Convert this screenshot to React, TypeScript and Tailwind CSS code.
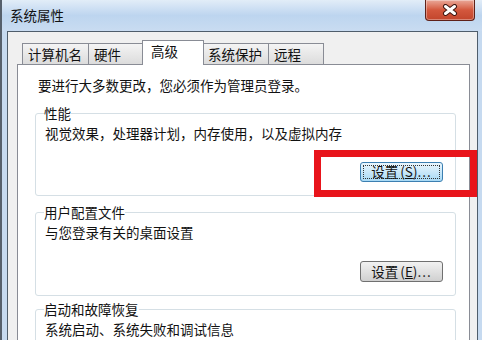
const tabs = [
  { label: "计算机名", width: "w-[67px]" },
  { label: "硬件", width: "w-[56px]" },
  { label: "高级", width: "w-[62px]", active: true },
  { label: "系统保护", width: "w-[67px]" },
  { label: "远程", width: "w-[56px]" },
];

function CloseButton() {
  return (
    <div className="absolute top-0 right-[7px] w-[50px] h-[21px] rounded-b-[4px] border border-t-0 border-[#5e2119] bg-gradient-to-b from-[#e9a899] via-[#d3573d] to-[#c2452c] flex items-center justify-center shadow-[inset_0_0_0_1px_rgba(255,255,255,0.35)]">
      <svg width="16" height="12" viewBox="0 0 16 12">
        <path d="M3.5 2.5 L12.5 9.5 M12.5 2.5 L3.5 9.5" stroke="#3d1611" strokeWidth="5" strokeLinecap="round" />
        <path d="M3.5 2.5 L12.5 9.5 M12.5 2.5 L3.5 9.5" stroke="#ffffff" strokeWidth="3" strokeLinecap="round" />
      </svg>
    </div>
  );
}

function SetupButton({ hotkey, focused }: { hotkey: string; focused?: boolean }) {
  return (
    <div
      className={
        focused
          ? "w-[83px] h-[20px] rounded-[3px] border border-[#3c7fb1] bg-gradient-to-b from-[#eaf6fd] to-[#a7d9f5] p-[2px]"
          : "w-[83px] h-[21px] rounded-[3px] border border-[#707070] bg-gradient-to-b from-[#f2f2f2] to-[#d0d0d0] p-[2px]"
      }
    >
      <div
        className={
          focused
            ? "h-full border border-dotted border-[#333] flex items-center justify-center leading-none"
            : "h-full flex items-center justify-center leading-none"
        }
      >
        设置<span className="ml-[2px]">(</span>
        <span className="underline">{hotkey}</span>)<span className="tracking-[1px]">...</span>
      </div>
    </div>
  );
}

function GroupBox({
  title,
  text,
  hotkey,
  focused,
  className,
}: {
  title: string;
  text: string;
  hotkey?: string;
  focused?: boolean;
  className: string;
}) {
  return (
    <fieldset className={`border border-[#d5dfe5] rounded-[3px] pl-[8px] pr-[12px] pb-[13px] ${className}`}>
      <legend className="px-0 leading-[18px]">{title}</legend>
      <p className="mt-[2px] pl-[1px] leading-[19px]">{text}</p>
      {hotkey && (
        <div className="flex justify-end mt-[19px]">
          <SetupButton hotkey={hotkey} focused={focused} />
        </div>
      )}
    </fieldset>
  );
}

export default function App() {
  return (
    <div className="relative w-[482px] h-[340px] overflow-hidden border-l-2 border-[#56606c] bg-[#c6daf0] text-[13.5px] text-[#111] font-['Noto_Sans_CJK_SC','Noto_Sans',sans-serif]">
      {/* Title bar */}
      <div className="h-[31px] flex items-center pl-[8px] bg-gradient-to-b from-[#e2edf8] via-[#bdd5ef] to-[#c9dcf1]">
        系统属性
      </div>
      <CloseButton />

      {/* Client area */}
      <div className="ml-[5px] mr-[4px] h-[309px] border border-[#4f5d6b] border-b-0 bg-[#f0f0f0] pt-[8px] pl-[9px] pr-[7px] flex flex-col">
        {/* Tabs */}
        <div className="flex items-end h-[24px] pl-[5px] relative z-10">
          {tabs.map((tab, i) =>
            tab.active ? (
              <div
                key={tab.label}
                className={`${tab.width} h-[25px] -mb-px -ml-[2px] relative z-10 border border-b-0 border-[#898c95] bg-white flex items-center pl-[8px] pb-[3px]`}
              >
                {tab.label}
              </div>
            ) : (
              <div
                key={tab.label}
                className={`${tab.width} h-[21px] ${i === 0 ? "" : i === 3 ? "-ml-[2px]" : "-ml-px"} border border-b-0 border-[#898c95] bg-gradient-to-b from-[#f4f4f4] to-[#dcdcdc] flex items-center pl-[5px]`}
              >
                {tab.label}
              </div>
            )
          )}
        </div>

        {/* Tab panel */}
        <div className="flex-1 border border-[#898c95] bg-white pt-[11px] pl-[17px] pr-[13px]">
          <p className="ml-[3px] leading-[18px]">要进行大多数更改，您必须作为管理员登录。</p>
          <GroupBox
            className="mt-[10px]"
            title="性能"
            text="视觉效果，处理器计划，内存使用，以及虚拟内存"
            hotkey="S"
            focused
          />
          <GroupBox className="mt-[7px]" title="用户配置文件" text="与您登录有关的桌面设置" hotkey="E" />
          <GroupBox className="mt-[4px]" title="启动和故障恢复" text="系统启动、系统失败和调试信息" />
        </div>
      </div>

      {/* Red highlight */}
      <div className="absolute left-[312px] top-[150px] w-[163px] h-[47px] border-[7px] border-[#e8141b]" />
    </div>
  );
}
